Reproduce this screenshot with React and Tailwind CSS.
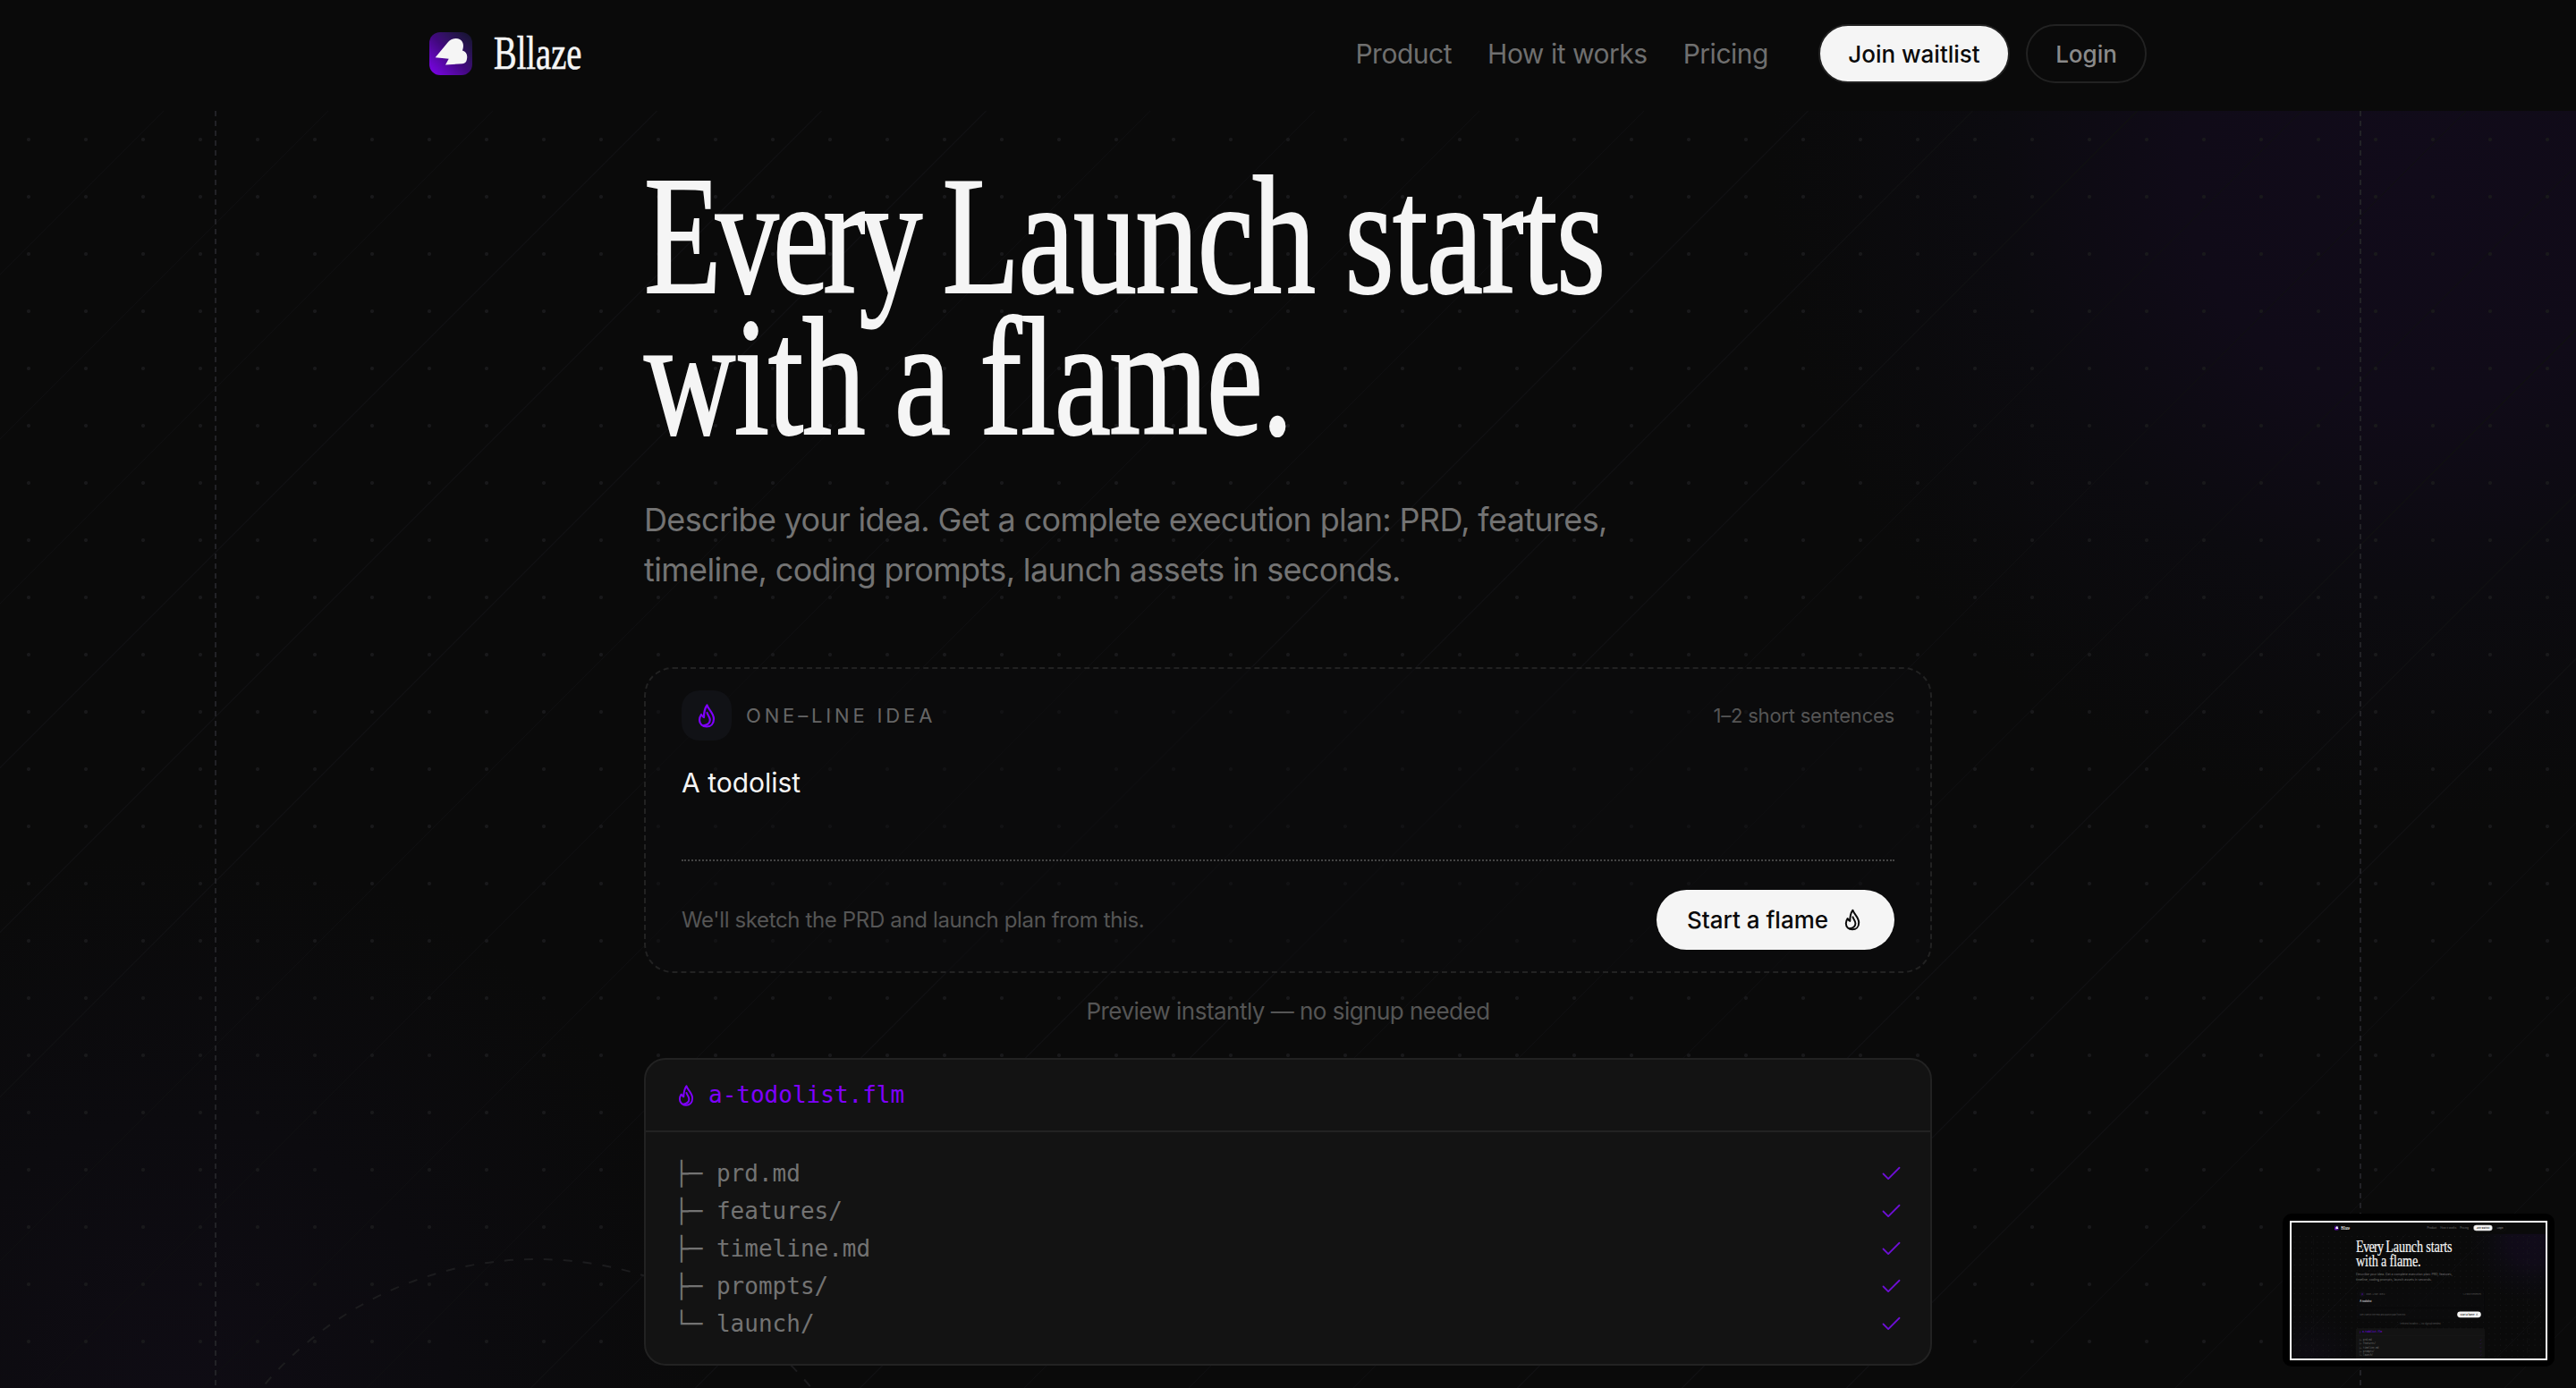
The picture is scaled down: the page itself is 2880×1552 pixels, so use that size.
import { Check } from 'lucide-react';

const sans = 'font-["Inter",sans-serif]';
const mono = 'font-["DejaVu_Sans_Mono",monospace]';
const serif = 'font-["Liberation_Serif",serif]';

const navLinks = [
    { name: 'Product' },
    { name: 'How it works' },
    { name: 'Pricing' },
];

const files = [
    { branch: '├─', name: 'prd.md' },
    { branch: '├─', name: 'features/' },
    { branch: '├─', name: 'timeline.md' },
    { branch: '├─', name: 'prompts/' },
    { branch: '└─', name: 'launch/' },
];

const Flame = ({ className }) => (
    <svg viewBox="0 0 20 27" fill="none" stroke="currentColor" strokeWidth="2.2" strokeLinejoin="round" strokeLinecap="round" className={className}>
        <path d="M10.5 1.5 C11.5 6 18 10 18 17 C18 22.5 14.5 25.5 10 25.5 C5.5 25.5 2 22.5 2 18 C2 15.5 3 13.5 4 12 C5 13.5 6 14.5 7 15 C7 10 8 5 10.5 1.5 Z" />
        <path d="M10.5 10 C11.5 13 13.8 15 13.8 18 C13.8 21.5 10.5 23.8 6.5 24.3" />
    </svg>
);

const Logo = () => (
    <div className="w-12 h-12 rounded-xl bg-gradient-to-tr from-[#8000f0] via-[#40087c] to-[#12122a] overflow-hidden">
        <svg viewBox="0 0 48 48" className="w-12 h-12" fill="#f5f5f5">
            <path d="M6.7 28.3 L21 11 C24 7.5 30 6 34 8 C38 10 39 15 37 20.5 C41 21.5 43 25 42 30 C41.5 33.5 40 35 37 35.2 L18 36.5 L21.7 29.7 Z" />
        </svg>
    </div>
);

const Backdrop = () => (
    <div className="absolute inset-0 overflow-hidden">
        {/* purple glows */}
        <div className="absolute inset-0 bg-[radial-gradient(circle_at_2700px_70px,#110b1a_0px,#100b18_260px,#0c0b10_460px,transparent_720px)]" />
        <div className="absolute inset-0 bg-[radial-gradient(circle_at_200px_1428px,#0f0c14_0px,#0c0b0f_300px,transparent_600px)]" />
        {/* diagonal lines + dots */}
        <div className="absolute inset-0 bg-[repeating-linear-gradient(135deg,transparent_0px,transparent_129px,#0f0f11_129px,#0f0f11_130px)]" />
        <div className="absolute inset-0 bg-[radial-gradient(circle,#19191b_1.5px,transparent_2.5px)] bg-[length:64px_64px]" />
        {/* guide lines */}
        <div className="absolute top-0 bottom-0 left-[240px] w-[2px] bg-[repeating-linear-gradient(180deg,#222226_0px,#222226_6px,transparent_6px,transparent_11px)]" />
        <div className="absolute top-0 bottom-0 left-[2638px] w-[2px] bg-[repeating-linear-gradient(180deg,#222226_0px,#222226_6px,transparent_6px,transparent_11px)]" />
        <svg className="absolute left-0 top-0 w-[2880px] h-[1428px]" fill="none">
            <circle cx="600" cy="1684" r="400" stroke="#1c1c1e" strokeWidth="2" strokeDasharray="10 12" />
        </svg>
    </div>
);

const Header = () => (
    <header className="relative z-10 h-[124px] bg-[#0a0a0a] flex justify-center">
        <div className="w-[1920px] flex items-center justify-between pb-[4px]">
            <div className="flex items-center gap-[24px]">
                <Logo />
                <span className={`${serif} text-[52px] leading-none text-[#f5f5f5] [-webkit-text-stroke:0.6px_#f5f5f5] origin-left scale-x-[0.74] w-[98px] whitespace-nowrap`}>Bllaze</span>
            </div>
            <div className="flex items-center">
                <nav className="flex items-center gap-[40px] mr-[56px] tracking-[-0.03em]">
                    {navLinks.map((link) => (
                        <a key={link.name} href="#" className="text-[30px] text-[#6f6f6f]">{link.name}</a>
                    ))}
                </nav>
                <a href="#" className="h-[66px] w-[214px] flex items-center justify-center rounded-full bg-[#f5f5f5] border-2 border-[#222] text-[26px] font-medium text-[#0a0a0a]">Join waitlist</a>
                <a href="#" className="h-[66px] w-[135px] ml-[18px] flex items-center justify-center rounded-full border-2 border-[#222] text-[26px] font-medium text-[#8a8a8a]">Login</a>
            </div>
        </div>
    </header>
);

const Hero = () => (
    <main className="relative w-[1440px] mx-auto pt-[61px]">
        <h1 className={`${serif} text-[189px] leading-[158px] text-[#f5f5f5] [-webkit-text-stroke:2px_#f5f5f5] origin-left scale-x-[0.75] whitespace-nowrap tracking-[-2px]`}>
            <span className="tracking-[-9px]">Every </span>Launch starts<br />with a flame.
        </h1>
        <p className="mt-[52px] text-[36px] leading-[56px] tracking-[-0.018em] text-[#737373] w-[1200px]">
            Describe your idea. Get a complete execution plan: PRD, features,<br />timeline, coding prompts, launch assets in seconds.
        </p>

        {/* idea card */}
        <section className="mt-[81px] h-[342px] rounded-[32px] border-2 border-dashed border-[#222] bg-[#0c0c0d]/50 px-[40px] pt-[24px]">
            <div className="flex items-center justify-between">
                <div className="flex items-center gap-[16px]">
                    <div className="w-[56px] h-[56px] rounded-[20px] bg-[#111216] flex items-center justify-center">
                        <Flame className="w-[20px] h-[27px] text-[#7f00ff]" />
                    </div>
                    <span className="text-[22px] tracking-[0.175em] text-[#666]">ONE–LINE IDEA</span>
                </div>
                <span className="text-[22px] tracking-[-0.01em] text-[#555]">1–2 short sentences</span>
            </div>
            <div className="mt-[25px] text-[30px] leading-[44px] text-[#f5f5f5]">A todolist</div>
            <div className="mt-[64px] border-t-2 border-dotted border-[#444]" />
            <div className="mt-[32px] flex items-center justify-between">
                <span className="text-[24px] tracking-[-0.015em] text-[#555]">We'll sketch the PRD and launch plan from this.</span>
                <button className="h-[67px] w-[266px] pr-[4px] rounded-full bg-[#f5f5f5] flex items-center justify-center gap-[18px] text-[26px] font-medium text-[#0a0a0a]">
                    Start a flame <Flame className="w-[18px] h-[25px]" />
                </button>
            </div>
        </section>

        <p className="mt-[26px] text-center text-[26px] leading-[34px] tracking-[-0.02em] text-[#555]">Preview instantly — no signup needed</p>

        {/* file tree */}
        <section className="mt-[35px] h-[344px] rounded-[24px] border-2 border-[#222] bg-[#131313]">
            <div className={`${mono} h-[81px] border-b-2 border-[#222] px-[36px] flex items-center gap-[16px] text-[26px] text-[#7f00ff]`}>
                <Flame className="w-[18px] h-[24px]" />
                a-todolist.flm
            </div>
            <ul className={`${mono} pt-[25px] pl-[32px] pr-[30px] text-[26px] leading-[42px] text-[#737373]`}>
                {files.map((file) => (
                    <li key={file.name} className="flex items-center justify-between whitespace-pre">
                        <span>{file.branch} {file.name}</span>
                        <Check size={27} strokeWidth={1.6} className="text-[#6d0fd6]" />
                    </li>
                ))}
            </ul>
        </section>
    </main>
);

const Page = () => (
    <div className={`${sans} relative w-[2880px] h-[1552px] bg-[#0a0a0a] overflow-hidden`}>
        <div className="absolute inset-x-0 top-[124px] bottom-0">
            <Backdrop />
        </div>
        <Header />
        <Hero />
    </div>
);

const App = () => (
    <div className="relative w-[2880px] h-[1552px] overflow-hidden">
        <Page />
        {/* minimap */}
        <div className="absolute left-[2552px] top-[1357px] w-[304px] h-[171px] rounded-[10px] bg-black flex items-center justify-center">
            <div className="w-[288px] h-[156px] border-2 border-white overflow-hidden">
                <div className="origin-top-left scale-[0.1] w-[2880px] h-[1552px]">
                    <Page />
                </div>
            </div>
        </div>
    </div>
);

export default App;
